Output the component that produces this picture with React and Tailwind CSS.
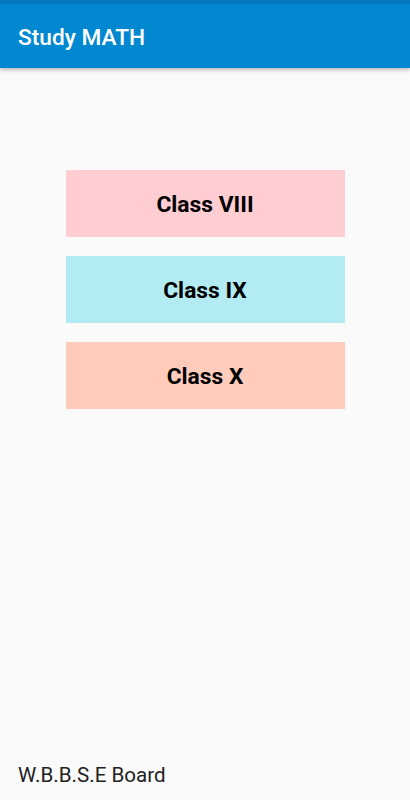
const classes = [
  { label: "Class VIII", bg: "bg-[#ffcdd2]" },
  { label: "Class IX", bg: "bg-[#b2ebf2]" },
  { label: "Class X", bg: "bg-[#ffccbc]" },
];

const App = () => (
  <div className="flex flex-col h-[800px] w-full bg-[#fafafa] font-['Roboto',sans-serif]">
    <header className="relative h-[68px] shrink-0 bg-[#0288d1] shadow-[0_2px_4px_rgba(0,0,0,0.25)]">
      <div className="h-[4px] bg-[#0279bd]" />
      <h1 className="pl-[18px] pt-[20px] text-[22.7px] leading-[28px] font-medium text-white">Study MATH</h1>
    </header>
    <main className="flex-1 flex flex-col items-center gap-[19px] pt-[102px]">
      {classes.map((c) => (
        <button
          key={c.label}
          type="button"
          className={`${c.bg} w-[279px] h-[67px] pt-[3px] text-[22.8px] font-bold text-black`}
        >
          {c.label}
        </button>
      ))}
    </main>
    <footer className="pl-[18px] pb-[12px] text-[20.6px] leading-[26px] text-[#212121]">W.B.B.S.E Board</footer>
  </div>
);

export default App;
